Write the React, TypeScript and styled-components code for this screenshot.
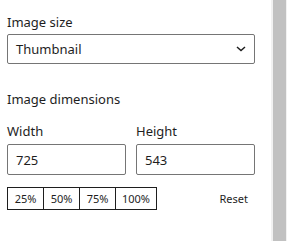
import React from 'react';
import styled, { createGlobalStyle } from 'styled-components';

const GlobalStyle = createGlobalStyle`
  html, body {
    margin: 0;
    padding: 0;
    background: #ffffff;
  }
  body {
    font-family: "Noto Sans", "Open Sans", sans-serif;
    color: #1e1e1e;
  }
`

const Frame = styled.div`
  display: flex;
  width: 287px;
  height: 241px;
  overflow: hidden;
`

const Panel = styled.div`
  flex: 1;
  padding: 13px 16px 0 7px;
  box-sizing: border-box;
  display: flex;
  flex-direction: column;
`

const ScrollTrack = styled.div`
  width: 16px;
  background: #f1f1f1;
  padding: 0 1px 0 2px;
  box-sizing: border-box;
  display: flex;
`

const ScrollThumb = styled.div`
  flex: 1;
  background: #c1c1c1;
`

const Label = styled.label<{ $gap?: number }>`
  display: block;
  font-size: 13px;
  line-height: 18px;
  margin-bottom: ${(p) => p.$gap ?? 4}px;
`

const Heading = styled.div`
  font-size: 13px;
  line-height: 18px;
  margin: 26px 0 14px;
`

const SelectBox = styled.div`
  height: 30px;
  box-sizing: border-box;
  border: 1px solid #757575;
  border-radius: 2px;
  display: flex;
  align-items: center;
  justify-content: space-between;
  padding: 0 8px;
  font-size: 13px;
  width: 248px;
`

const Row = styled.div`
  display: flex;
  gap: 10px;
  width: 248px;
`

const Field = styled.div`
  flex: 1;
  display: flex;
  flex-direction: column;
`

const Input = styled.div`
  height: 31px;
  box-sizing: border-box;
  border: 1px solid #757575;
  border-radius: 2px;
  display: flex;
  align-items: center;
  padding: 0 8px;
  font-size: 13px;
`

const ButtonRow = styled.div`
  display: flex;
  align-items: center;
  justify-content: space-between;
  margin-top: 12px;
  width: 248px;
`

const Group = styled.div`
  display: flex;
`

const PresetButton = styled.div<{ $w: number }>`
  width: ${(p) => p.$w}px;
  height: 23px;
  box-sizing: border-box;
  border: 1px solid #1e1e1e;
  margin-left: -1px;
  display: flex;
  align-items: center;
  justify-content: center;
  font-size: 11px;

  &:first-child {
    margin-left: 0;
  }
`

const ResetButton = styled.div`
  font-size: 11px;
  padding: 0 7px;
`

const Chevron = () => (
  <svg width="10" height="6" viewBox="0 0 10 6" fill="none">
    <path d="M1 1l4 3.5L9 1" stroke="#1e1e1e" strokeWidth="1.5" />
  </svg>
)

const presets = [
  { label: '25%', w: 37 },
  { label: '50%', w: 37 },
  { label: '75%', w: 37 },
  { label: '100%', w: 42 },
]

export default function App() {
  return (
    <>
      <GlobalStyle />
      <Frame>
        <Panel>
          <Label $gap={3}>Image size</Label>
          <SelectBox>
            <span>Thumbnail</span>
            <Chevron />
          </SelectBox>
          <Heading>Image dimensions</Heading>
          <Row>
            <Field>
              <Label $gap={4}>Width</Label>
              <Input>725</Input>
            </Field>
            <Field>
              <Label $gap={4}>Height</Label>
              <Input>543</Input>
            </Field>
          </Row>
          <ButtonRow>
            <Group>
              {presets.map((p) => (
                <PresetButton key={p.label} $w={p.w}>{p.label}</PresetButton>
              ))}
            </Group>
            <ResetButton>Reset</ResetButton>
          </ButtonRow>
        </Panel>
        <ScrollTrack>
          <ScrollThumb />
        </ScrollTrack>
      </Frame>
    </>
  )
}
